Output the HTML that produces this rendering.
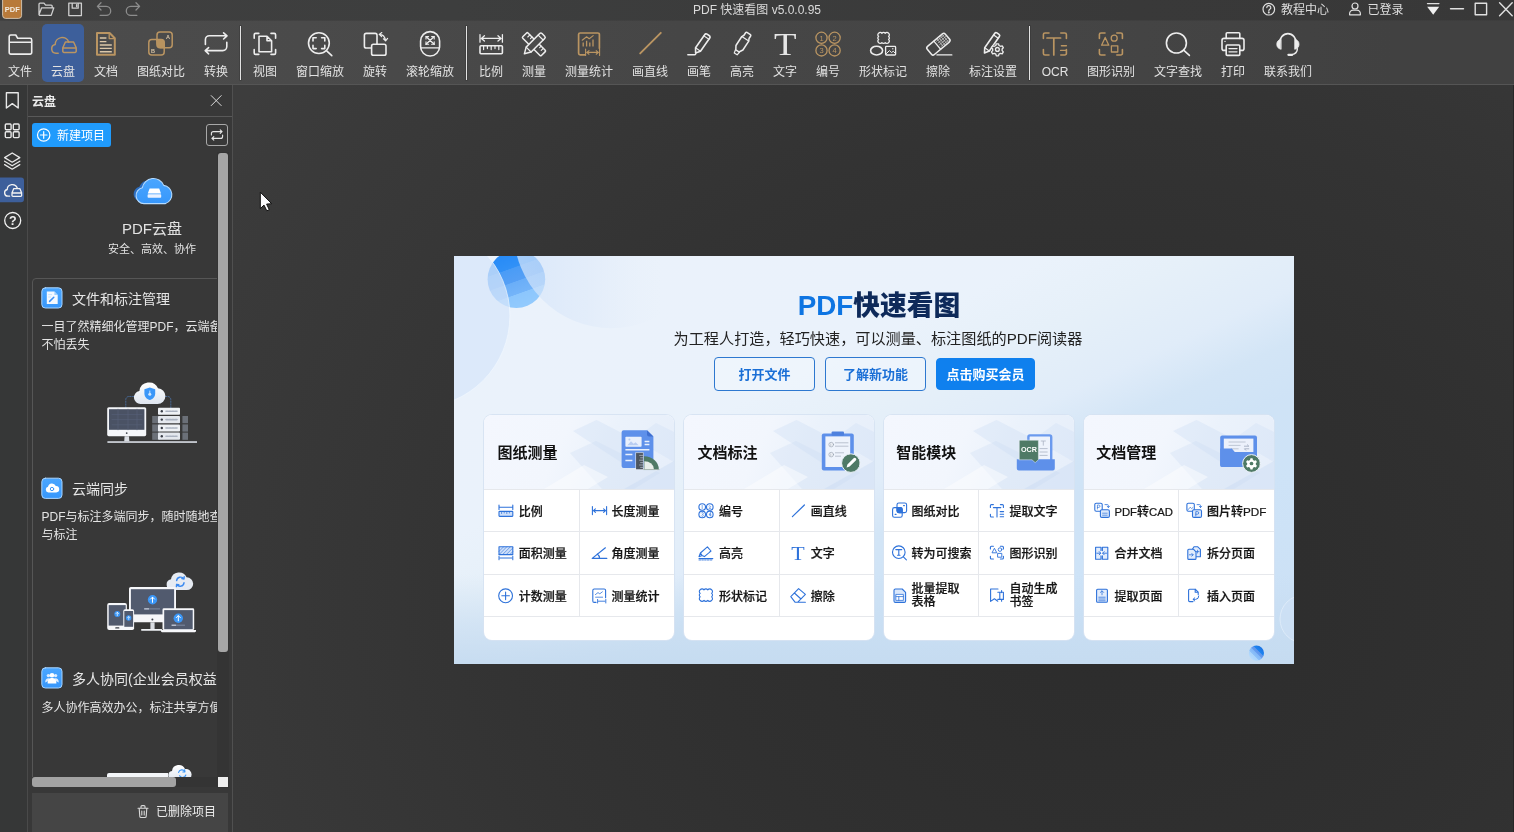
<!DOCTYPE html>
<html lang="zh-CN">
<head>
<meta charset="utf-8">
<title>PDF 快速看图 v5.0.0.95</title>
<style>
*{box-sizing:border-box;margin:0;padding:0}
html,body{width:1514px;height:832px;overflow:hidden;background:#2e2e2e}
body{font-family:"Liberation Sans","Noto Sans CJK SC",sans-serif;color:#e4e4e4;position:relative;font-size:12px}
svg{display:block;overflow:visible}
#app{position:absolute;left:0;top:0;width:1514px;height:832px;will-change:transform}
.abs{position:absolute}
/* ---------- title bar ---------- */
#titlebar{position:absolute;left:0;top:0;width:1514px;height:20px;background:linear-gradient(90deg,#3f3f3f 0%,#3d3e3e 30%,#393939 75%,#383838 100%)}
#titlebar .ttl{position:absolute;left:0;width:1514px;top:0;height:20px;line-height:20px;text-align:center;font-size:12px;color:#dadada;letter-spacing:0}
#titlebar .rt{position:absolute;top:0;height:20px;line-height:20px;font-size:12px;color:#dedede;white-space:nowrap}
/* ---------- toolbar ---------- */
#toolbar{position:absolute;left:0;top:20px;width:1514px;height:64px;background:linear-gradient(rgba(58,58,58,.5) 0,rgba(58,58,58,.5) 1px,rgba(58,58,58,0) 1px),linear-gradient(90deg,#4c4c4c 0%,#4a4a4a 20%,#464646 45%,#454545 70%,#414141 92%,#414141 100%)}
.tb{position:absolute;top:0;height:64px;width:0}
.tb .ic{position:absolute;left:-16px;top:8px;width:32px;height:32px}
.tb .lb{position:absolute;left:-40px;width:80px;top:43.500px;height:16px;line-height:16px;text-align:center;font-size:12px;color:#e2e2e2;white-space:nowrap}
.tb.sel:before{content:"";position:absolute;left:-21px;top:4px;width:42px;height:58px;border-radius:5px;background:#3d5f9b}
.tsep{position:absolute;top:6px;width:1.300px;height:54px;background:#e2e2e2;box-shadow:0 0 0 .8px rgba(40,40,40,.35)}
/* ---------- left strip ---------- */
#strip{position:absolute;left:0;top:84px;width:27px;height:748px;background:#363737}
#stripline{position:absolute;left:27px;top:84px;width:1px;height:748px;background:#4a4a4a}
#panel{position:absolute;left:28px;top:84px;width:204px;height:748px;background:#383838}
#panelline{position:absolute;left:232px;top:84px;width:1px;height:748px;background:#505050}
.pt{position:absolute;left:44px;height:20px;line-height:20px;font-size:14px;color:#e6e6e6;white-space:nowrap}
.pd{position:absolute;left:13.5px;font-size:12px;line-height:17.500px;color:#e4e4e4;white-space:nowrap}
/* ---------- main ---------- */
#main{position:absolute;left:233px;top:84px;width:1281px;height:748px;background:radial-gradient(ellipse 500px 400px at 867px 516px,#2c2c2c 0%,#2e2e2e 40%,#303030 80%,#333333 120%,#373737 160%,#3b3b3b 200%,#3d3d3d 212%,#3d3d3d 260%)}
#welcome{position:absolute;left:454px;top:256px;width:840px;height:408px;background:linear-gradient(180deg,rgba(197,219,240,0) 0,rgba(197,219,240,0) 78%,rgba(197,219,240,.55) 90%,rgba(197,219,240,.92) 100%),linear-gradient(155deg,#ebf2fb 0%,#eaf2fb 35%,#e6f0f9 43%,#e0ecf9 53%,#d3e5f6 59.500%,#cfe3f6 66%,#cee3f7 75%,#cbe0f5 100%);overflow:hidden;color:#111}
.wt{position:absolute;left:0;width:850px;top:28px;height:44px;line-height:44px;text-align:center;font-size:26.750px;font-weight:900;color:#0e2a5a;white-space:nowrap;letter-spacing:0}
.ws{position:absolute;left:0;width:848px;top:71px;height:24px;line-height:24px;text-align:center;font-size:15.150px;color:#222;white-space:nowrap}
.wb{position:absolute;top:101px;height:34px;line-height:34.500px;border:1px solid #2d78d0;border-radius:4px;text-align:center;font-size:13px;font-weight:700;color:#1a6fd6;white-space:nowrap;background:rgba(240,246,253,.6)}
.wbf{background:#0f80ee;border-color:#0f80ee;color:#fff;top:102px;height:32px;line-height:32.500px}
.cd{will-change:transform;position:absolute;top:159px;width:189.500px;height:225px;border-radius:8px;background:#fff;overflow:hidden;box-shadow:0 0 0 1px rgba(214,226,242,.9)}
.ch{position:absolute;left:0;top:0;width:100%;height:74px;overflow:hidden;background:linear-gradient(115deg,#f4f7fe 0%,#f2f6fd 40%,#ebf2fb 62%,#e6eefa 100%)}
.cht{position:absolute;left:13.500px;top:26px;height:24px;line-height:24px;font-size:15px;font-weight:700;color:#111;white-space:nowrap}
.ct{position:absolute;height:42px;line-height:44.400px;font-size:12px;font-weight:500;color:#161616;white-space:nowrap;-webkit-text-stroke:.22px #161616}
.ct2{line-height:13.500px;padding-top:8.200px}
.hl{position:absolute;left:0;width:100%;height:1px;background:#e6e8ec}
.vl{position:absolute;left:94.800px;top:74px;width:1px;height:128px;background:#e6e8ec}
</style>
</head>
<body>
<div id="app">
<div id="titlebar">
  <div class="ttl">PDF 快速看图 v5.0.0.95</div>
  <div class="rt" style="left:1281px">教程中心</div>
  <div class="rt" style="left:1367.5px">已登录</div>
</div>
<div id="toolbar">
<div class="tb" style="left:20px"><div class="lb">文件</div></div>
<div class="tb sel" style="left:63px"><div class="lb">云盘</div></div>
<div class="tb" style="left:106px"><div class="lb">文档</div></div>
<div class="tb" style="left:161px"><div class="lb">图纸对比</div></div>
<div class="tb" style="left:216px"><div class="lb">转换</div></div>
<div class="tb" style="left:265px"><div class="lb">视图</div></div>
<div class="tb" style="left:320px"><div class="lb">窗口缩放</div></div>
<div class="tb" style="left:375px"><div class="lb">旋转</div></div>
<div class="tb" style="left:430px"><div class="lb">滚轮缩放</div></div>
<div class="tb" style="left:491px"><div class="lb">比例</div></div>
<div class="tb" style="left:534px"><div class="lb">测量</div></div>
<div class="tb" style="left:589px"><div class="lb">测量统计</div></div>
<div class="tb" style="left:650px"><div class="lb">画直线</div></div>
<div class="tb" style="left:699px"><div class="lb">画笔</div></div>
<div class="tb" style="left:742px"><div class="lb">高亮</div></div>
<div class="tb" style="left:785px"><div class="lb">文字</div></div>
<div class="tb" style="left:828px"><div class="lb">编号</div></div>
<div class="tb" style="left:883px"><div class="lb">形状标记</div></div>
<div class="tb" style="left:938px"><div class="lb">擦除</div></div>
<div class="tb" style="left:993px"><div class="lb">标注设置</div></div>
<div class="tb" style="left:1055px"><div class="lb">OCR</div></div>
<div class="tb" style="left:1111px"><div class="lb">图形识别</div></div>
<div class="tb" style="left:1178px"><div class="lb">文字查找</div></div>
<div class="tb" style="left:1233px"><div class="lb">打印</div></div>
<div class="tb" style="left:1288px"><div class="lb">联系我们</div></div>
<div class="tsep" style="left:240px"></div>
<div class="tsep" style="left:466px"></div>
<div class="tsep" style="left:1029px"></div>
</div>
<svg id="topsvg" class="abs" style="left:0;top:0" width="1514" height="84" viewBox="0 0 1514 84" fill="none" stroke-width="1.6" stroke-linecap="round" stroke-linejoin="round">
<!-- ===== title bar icons ===== -->
<rect x="2.600" y="-3" width="19" height="21.400" rx="3" fill="#b87a3a" stroke="#d6c9b8" stroke-width=".9"/>
<text x="12.3" y="12" font-family="Liberation Sans,sans-serif" font-weight="bold" font-size="7.5" fill="#f3ece2" text-anchor="middle" stroke="none">PDF</text>
<g stroke="#cfcfcf" stroke-width="1.3">
<path d="M39 14.8V4.2a1 1 0 0 1 1-1h4l1.6 2h5.6a1 1 0 0 1 1 1v1.6M39 14.8l2.6-7h12.2l-2.6 7.6H39.6z"/>
<path d="M68.8 3.2h12.6v12.4H68.8zM72.2 3.2v5h6v-5M76.6 4.6v2"/>
</g>
<g stroke="#8d8d8d" stroke-width="1.3">
<path d="M101 2.8l-3.6 3.6 3.6 3.6M97.6 6.4h8.6a4.5 4.5 0 0 1 0 9h-6"/>
<path d="M136 2.8l3.6 3.6-3.6 3.6M139.4 6.4h-8.6a4.5 4.5 0 0 0 0 9h6"/>
</g>
<!-- right side of title bar -->
<g stroke="#e0e0e0" stroke-width="1.2">
<circle cx="1268.8" cy="9.2" r="5.8"/>
<path d="M1266.8 7.6a2 2 0 1 1 3 1.7c-.7.4-1 .8-1 1.6"/>
<circle cx="1268.8" cy="12.6" r=".4" fill="#e0e0e0"/>
<circle cx="1355" cy="6" r="3"/>
<path d="M1349.6 14.8v-1a3.6 3.6 0 0 1 3.6-3.6h3.6a3.6 3.6 0 0 1 3.6 3.6v1z"/>
<path d="M1427.5 3.6h11.4" stroke-width="1.4"/>
<path d="M1427.2 6.8h12l-6 8z" fill="#f0f0f0" stroke="none"/>
<path d="M1450.5 8.8h13" stroke-width="1.4"/>
<rect x="1475.2" y="3.2" width="11.4" height="11.6" stroke-width="1.4"/>
<path d="M1499.6 2.8l12.6 13M1512.2 2.8l-12.6 13" stroke-width="1.4"/>
</g>
<!-- ===== toolbar icons ===== -->
<g stroke="#ededed">
<!-- 文件 -->
<path d="M9.2 36.6a1.6 1.6 0 0 1 1.6-1.6h5l1.9 3.3h12.4a1.6 1.6 0 0 1 1.6 1.6v12.6a1.6 1.6 0 0 1-1.6 1.6H10.8a1.6 1.6 0 0 1-1.6-1.6zM9.2 42.2h22.5"/>
<!-- 转换 -->
<path d="M205.4 44.4v-4.7a4 4 0 0 1 4-4h17.2M223.6 32.8l3.4 3-3.4 3.2M226.8 42.2v4.4a4 4 0 0 1-4 4h-17.2M208.6 47.6l-3.4 3 3.4 3.2"/>
<!-- 视图 -->
<path d="M254.2 38.2v-3.4a1.4 1.4 0 0 1 1.4-1.4h3.2M271 33.4h3.2a1.4 1.4 0 0 1 1.4 1.4v3.4M275.6 49.6v3.4a1.4 1.4 0 0 1-1.4 1.4H271M258.8 54.4h-3.2a1.4 1.4 0 0 1-1.4-1.4v-3.4"/>
<path d="M259 36.2h8l4.6 4.6v11h-12.6zM267 36.2v4.6h4.6"/>
<!-- 窗口缩放 -->
<circle cx="318.9" cy="43.1" r="10.4"/>
<path d="M326.4 50.6l5.4 5M313 41v-3.2h3.2M321.6 37.8h3.2V41M324.8 45.4v3.2h-3.2M316.2 48.6H313v-3.2"/>
<!-- 旋转 -->
<rect x="364.4" y="33.4" width="12.6" height="14.6" rx="1.8"/>
<rect x="371.6" y="44.2" width="14.4" height="11" rx="1.8" fill="#4b4b4b"/>
<path d="M379.4 34.4q5.4.2 6 6.2M381.6 36.6l-2.4-2.2 2.6-1.8M383.4 38.8l2.2 2 2-2.4" stroke-width="1.2"/>
<!-- 滚轮缩放 -->
<rect x="420.6" y="31.6" width="19" height="24.4" rx="9.5"/>
<path d="M420.6 47.8h19M426 36.6l8.2 7.6M434.2 36.6l-8.200 7.6" stroke-width="1.3"/>
<path d="M426 39v-2.4h2.6M431.600 36.600h2.600v2.4M434.2 41.8v2.4h-2.600M428.6 44.2H426v-2.400" stroke-width="1.100"/>
<!-- 比例 -->
<path d="M480 34.600v7.600M502.4 34.600v7.600M481.400 38.400h19.600M484.400 35.800l-3 2.600 3 2.600M498 35.800l3 2.600-3 2.600" stroke-width="1.300"/>
<rect x="480" y="45.800" width="22.400" height="8" rx="1"/>
<path d="M483.600 46v3.600M487.400 46v2.600M491.200 46v3.600M495 46v2.600M498.800 46v3.600" stroke-width="1.200"/>
<!-- 测量 -->
<g transform="translate(534 44.200) rotate(45)" stroke-width="1.500">
<rect x="-13.200" y="-3.700" width="26.400" height="7.400" rx="1"/>
<path d="M-9.500 -3.700v3M-6.500 -3.700v2.200M6.500 -3.700v2.200M9.500 -3.700v3" stroke-width="1.100"/>
</g>
<g transform="translate(534 44.200) rotate(-45)" stroke-width="1.500">
<path d="M-7.600 -3.500H11.600a1.600 1.600 0 0 1 1.600 1.600v3.800a1.600 1.600 0 0 1-1.600 1.600H-7.600L-13.600 0z" fill="#4b4b4b"/>
<path d="M-7.600 -3.500v7M9.400 -3.500v7" stroke-width="1.200"/>
</g>
<!-- 画笔 -->
<g transform="translate(702.600 43) rotate(-55)">
<path d="M-8 -3h16.200a1.600 1.600 0 0 1 1.600 1.600v2.800a1.600 1.600 0 0 1-1.600 1.600H-8L-12.200 0z"/>
<path d="M-8 -3v6M6.600 -3v6" stroke-width="1.200"/>
</g>
<path d="M687.800 54.800h6.800q1.200 0 1.200-1.400" stroke-width="1.400"/>
<!-- 高亮 -->
<g transform="translate(742.400 43.200) rotate(-57) scale(.94)">
<path d="M-5.800 -4.400H5.600l2.400 1.200h3.200a1 1 0 0 1 1 1v4.400a1 1 0 0 1-1 1H8L5.600 4.400H-5.800L-9.800 2v-4z"/>
<path d="M-9.800 -2.400l-3.600.8v3.600l3.600.6M5.600 -4.400v8.800" stroke-width="1.300"/>
</g>
<!-- 形状标记 -->
<path d="M878.60 33.30a2.07 2.07 0 0 1 3.33 0a2.07 2.07 0 0 1 3.33 0a2.07 2.07 0 0 1 3.33 0a1.92 1.92 0 0 1 0 3.10a1.92 1.92 0 0 1 0 3.10a1.92 1.92 0 0 1 0 3.10a2.07 2.07 0 0 1 -3.33 0a2.07 2.07 0 0 1 -3.33 0a2.07 2.07 0 0 1 -3.33 0a1.92 1.92 0 0 1 0 -3.10a1.92 1.92 0 0 1 0 -3.10a1.92 1.92 0 0 1 0 -3.10z" stroke-width="1.300"/>
<ellipse cx="876.600" cy="50.600" rx="6" ry="4.400"/>
<rect x="885.600" y="46.400" width="10" height="8.600" rx=".8" stroke-width="1.300"/>
<path d="M886.400 53.600l3-3 2.200 2 1.600-1.400 2 2" stroke-width="1"/><circle cx="892.800" cy="48.800" r=".7" fill="#ededed" stroke="none"/>
<!-- 擦除 -->
<g transform="translate(938.400 44.200) rotate(-40) scale(.95)">
<rect x="-12.400" y="-5.600" width="24.800" height="11.200" rx="2.200"/>
<path d="M-1.600 -5.600v11.200" stroke-width="1.300"/>
<path d="M.6 -3.600h10M.6 -1.200h10.600M.6 1.200h10.600M.6 3.600h10M2.400 -5v10M4.800 -5v10M7.200 -5v10M9.600 -5v10" stroke-width=".7" stroke="#d0d0d0"/>
</g>
<path d="M937 54.900h14.800" stroke-width="1.400"/>
<!-- 标注设置 -->
<g transform="translate(991.600 42.800) rotate(-55)">
<path d="M-8 -2.800H9.600a1.500 1.500 0 0 1 1.500 1.500v2.600a1.500 1.500 0 0 1-1.500 1.500H-8L-12.400 0z"/>
<path d="M-8 -2.800v5.600M7.600 -2.800v5.600" stroke-width="1.200"/>
</g>
<g transform="translate(997.400 49.400)">
<circle r="5.600" fill="#4b4b4b" stroke="none"/>
<path d="M-1.100 -5.600h2.200l.5 1.700 1.500.8 1.700-.5 1.100 1.900-1.200 1.300v1.600l1.200 1.300-1.100 1.900-1.700-.5-1.500.8-.5 1.700h-2.200l-.5-1.700-1.500-.8-1.700.5-1.100-1.900 1.200-1.300v-1.600l-1.200-1.300 1.100-1.900 1.700.5 1.500-.8z" fill="#4b4b4b" stroke-width="1.300"/>
<circle r="1.900" stroke-width="1.300"/>
</g>
<!-- 文字查找 -->
<circle cx="1176.400" cy="43" r="10"/>
<path d="M1183.600 50.200l5.800 5.200"/>
<!-- 打印 -->
<path d="M1226.200 38.400v-4.600a1 1 0 0 1 1-1h11.600a1 1 0 0 1 1 1v4.600"/>
<path d="M1226.200 50.400h-2.200a2 2 0 0 1-2-2v-8a2 2 0 0 1 2-2h18a2 2 0 0 1 2 2v8a2 2 0 0 1-2 2h-2.200"/>
<rect x="1226.200" y="45" width="13.600" height="10.400" rx="1"/>
<path d="M1229 48.600h8M1229 51.800h8" stroke-width="1.300"/><circle cx="1225" cy="41.400" r=".7" fill="#ededed" stroke="none"/>
<!-- 联系我们 -->
<path d="M1279.400 43.600a8.500 10 0 0 1 17 0" stroke-width="1.700"/>
<path d="M1280.800 39.400a5 5 0 0 0 0 9.800zM1295 39.400a5 5 0 0 1 0 9.800z" fill="#ededed" stroke-width=".8"/>
<path d="M1297.400 48.600q-.2 5-5.400 6" stroke-width="1.400"/><path d="M1288.400 54.800h3.800" stroke-width="2.200"/>
</g>
<!-- gold icons -->
<g stroke="#ba9562">
<!-- 云盘 -->
<path d="M58.200 53.200H56a4.400 4.400 0 0 1-.8-8.700 7 7 0 0 1 13.600-2.300" stroke-width="1.500"/>
<path d="M65.400 42h8.200l2.600 5.800v3.400a1.200 1.200 0 0 1-1.200 1.200H64a1.200 1.200 0 0 1-1.200-1.200v-3.400zM62.800 48h13.400" stroke-width="1.500"/>
<!-- 文档 -->
<path d="M97 33h12.600l5.200 5.200v16.600H97z" stroke-width="2"/>
<path d="M109.200 33.400v5.200h5.200" stroke-width="1.300"/>
<path d="M99.800 38h6.600M99.800 41.600h6.600M99.800 45h12M99.800 48.400h12M99.800 51.800h12" stroke="#dcc7a8" stroke-width="1.400" stroke-linecap="butt"/>
<!-- 图纸对比 -->
<rect x="157" y="32" width="15.200" height="15.800" rx="3" stroke-width="1.500"/>
<rect x="148.800" y="39.600" width="15.400" height="15.400" rx="3" stroke-width="1.500"/>
<path d="M157 39.600h4.200a3 3 0 0 1 3 3v5.200h-4.200a3 3 0 0 1-3-3z" fill="#b8935f" stroke-width="1"/>
<text x="168" y="39" font-family="Liberation Sans,sans-serif" font-size="5.500" font-weight="bold" fill="#dcc7a8" stroke="none" text-anchor="middle">A</text>
<text x="153" y="53" font-family="Liberation Sans,sans-serif" font-size="5.500" font-weight="bold" fill="#dcc7a8" stroke="none" text-anchor="middle">B</text>
<!-- 测量统计 -->
<path d="M585 54.800h-4.800a1.600 1.600 0 0 1-1.600-1.600V34.600a1.600 1.600 0 0 1 1.600-1.600h17.600a1.600 1.600 0 0 1 1.600 1.600v13.600" stroke-width="1.700"/>
<path d="M583.200 46.400v-4M586.600 46.400v-5.600M589.800 46.400v-4M593 46.400v-7" stroke-width="1.300" stroke-linecap="butt"/>
<path d="M582.200 40.200l4.400-3.400 2.600 2 4-3.200" stroke-width="1.100"/>
<path d="M585.600 49v6.400M599.600 49v6.400M586.800 52.400h11.600M589 50.600l-2.200 1.800 2.200 1.800M596.200 50.600l2.200 1.800-2.200 1.800" stroke-width="1.100"/>
<!-- 画直线 -->
<path d="M640.200 53.400L660.800 32.800" stroke-width="1.900"/>
<!-- 编号 -->
<g stroke-width="1.300">
<circle cx="821.500" cy="37.800" r="5.600"/><circle cx="834.600" cy="37.800" r="5.600"/><circle cx="821.500" cy="50.400" r="5.600"/><circle cx="834.600" cy="50.400" r="5.600"/>
</g>
<g font-family="Liberation Sans,sans-serif" font-size="7.500" fill="#ba9562" stroke="none" text-anchor="middle">
<text x="821.500" y="40.500">1</text><text x="834.600" y="40.500">2</text><text x="821.500" y="53.100">3</text><text x="834.600" y="53.100">4</text>
</g>
<!-- OCR -->
<path d="M1043.400 38.400v-3.800a1.600 1.600 0 0 1 1.600-1.600h4M1060.800 33h4a1.600 1.600 0 0 1 1.600 1.600v3.800M1066.400 49.600v3.800a1.600 1.600 0 0 1-1.600 1.600h-4M1049 55h-4a1.600 1.600 0 0 1-1.600-1.600v-3.800"/>
<path d="M1047 38h13.600M1053.800 38v17" stroke-width="1.700"/>
<path d="M1061.400 45.800h5M1060.600 50.400h5.800" stroke-width="1.400"/>
<!-- 图形识别 -->
<path d="M1099.400 38.400v-3.800a1.600 1.600 0 0 1 1.600-1.600h4M1116.800 33h4a1.600 1.600 0 0 1 1.600 1.600v3.800M1122.400 49.600v3.800a1.600 1.600 0 0 1-1.600 1.600h-4M1105 55h-4a1.600 1.600 0 0 1-1.600-1.600v-3.800"/>
<path d="M1105.200 37.400l3.600 7.800h-7.200z" stroke-width="1.300"/>
<circle cx="1114.200" cy="38.200" r="3" stroke-width="1.300"/>
<rect x="1111.400" y="45.800" width="6.400" height="6.200" stroke-width="1.300"/>
</g>
<!-- 文字 (T) -->
<text x="785.200" y="54.500" font-family="Liberation Serif,Noto Serif CJK SC,serif" font-weight="400" font-size="32" fill="#e6e6e6" stroke="none" text-anchor="middle" textLength="22.500" lengthAdjust="spacingAndGlyphs">T</text>
</svg>

<div class="abs" style="left:0;top:84px;width:1514px;height:1px;background:#555;z-index:2"></div>
<div id="strip"></div><div id="stripline"></div>
<div id="panel"></div><div id="panelline"></div>
<!-- panel header -->
<div class="abs" style="left:32px;top:93px;height:18px;line-height:18px;font-size:12px;font-weight:700;color:#ececec">云盘</div>
<div class="abs" style="left:28px;top:116px;width:204px;height:1px;background:#595959"></div>
<!-- new project button -->
<div class="abs" style="left:32px;top:123px;width:79px;height:24px;border-radius:3px;background:#209bfc"></div>
<div class="abs" style="left:57px;top:127px;height:18px;line-height:18px;font-size:12px;color:#fff;white-space:nowrap">新建项目</div>
<!-- refresh button -->
<div class="abs" style="left:206px;top:124px;width:22px;height:22px;border:1px solid #a8a8a8;border-radius:3px"></div>
<!-- scroll tracks -->
<!-- cards area (clipped) -->
<div id="cards" class="abs" style="left:28px;top:150px;width:190px;height:627px;overflow:hidden">
  <div class="abs" style="left:0;top:69px;width:248px;text-align:center;font-size:15px;line-height:20px;color:#e2e2e2;white-space:nowrap">PDF云盘</div>
  <div class="abs" style="left:0;top:91px;width:248px;text-align:center;font-size:11px;line-height:16px;color:#e2e2e2;white-space:nowrap">安全、高效、协作</div>
  <div class="abs" style="left:4px;top:128px;width:260px;height:700px;border:1px solid #565656;border-radius:4px"></div>
  <div class="pt" style="top:139px">文件和标注管理</div>
  <div class="pd" style="top:169.300px">一目了然精细化管理PDF，云端备<br>不怕丢失</div>
  <div class="pt" style="top:329px">云端同步</div>
  <div class="pd" style="top:359.300px">PDF与标注多端同步，随时随地查<br>与标注</div>
  <div class="pt" style="top:519px">多人协同(企业会员权益</div>
  <div class="pd" style="top:549.800px">多人协作高效办公，标注共享方便</div>
</div>
<svg id="panelsvg" class="abs" style="left:0;top:84px" width="232" height="748" viewBox="0 84 232 748" fill="none" stroke-linecap="round" stroke-linejoin="round">
<defs>
<linearGradient id="gb" x1="0" y1="0" x2="0" y2="1"><stop offset="0" stop-color="#4aa6ff"/><stop offset="1" stop-color="#3797fb"/></linearGradient>
<linearGradient id="gw" x1="0" y1="0" x2="0" y2="1"><stop offset="0" stop-color="#ffffff"/><stop offset="1" stop-color="#dfe6f0"/></linearGradient>
</defs>
<!-- strip icons -->
<g stroke="#e8e8e8" stroke-width="1.4">
<path d="M6.400 92.800h11.800v15.200l-5.900-4.400-5.900 4.400z"/>
<rect x="5.300" y="124" width="5.800" height="5.800" rx="1"/><rect x="13.300" y="124" width="5.800" height="5.800" rx="1"/><rect x="5.300" y="131.800" width="5.800" height="5.800" rx="1"/><rect x="13.300" y="131.800" width="5.800" height="5.800" rx="1"/>
<path d="M12.200 153l7.600 4.600-7.600 4.600-7.600-4.600zM4.600 161.200l7.600 4.600 7.600-4.600M4.600 164.600l7.600 4.600 7.600-4.600" stroke-width="1.300"/>
</g>
<path d="M0 177.400h21a3 3 0 0 1 3 3v18.800a3 3 0 0 1-3 3H0z" fill="#3d5f9b"/>
<g stroke="#f2f2f2" stroke-width="1.300">
<path d="M9.600 196.200H7.800a3.400 3.400 0 0 1-.6-6.700 5.200 5.200 0 0 1 10-1.700"/>
<path d="M13.800 188.600h6l1.800 4.200v2.600a.9.900 0 0 1-.9.900h-7.800a.9.900 0 0 1-.9-.9v-2.600zM12 193h9.600"/>
<circle cx="12.700" cy="220.500" r="8"/>
</g>
<text x="12.700" y="225" font-family="Liberation Sans,sans-serif" font-size="12.500" font-weight="bold" fill="#f0f0f0" text-anchor="middle">?</text>
<!-- close X -->
<path d="M211.200 95.600l10 10M221.200 95.600l-10 10" stroke="#dcdcdc" stroke-width="1"/>
<!-- plus circle -->
<circle cx="43.700" cy="135" r="6.200" stroke="#fff" stroke-width="1.200"/><path d="M40.400 135h6.600M43.700 131.700v6.600" stroke="#fff" stroke-width="1.200"/>
<!-- refresh icon -->
<g stroke="#e6e6e6" stroke-width="1.100">
<path d="M211.400 135v-1.400a2 2 0 0 1 2-2h8.600M220.200 129.800l1.900 1.800-1.900 1.800M222.600 135v1.400a2 2 0 0 1-2 2h-8.600M213.800 136.600l-1.900 1.800 1.900 1.800"/>
</g>
<!-- PDF cloud logo -->
<g transform="translate(1.400 0)">
<path d="M139.500 201.500a7.500 7.500 0 0 1-1.500-14.800 9 9 0 0 1 14-4.200" fill="#2a7be0" opacity=".8"/>
<path d="M142.500 203.600a8 8 0 0 1-1.600-15.800 11.200 11.200 0 0 1 21.400-2.400 9.400 9.400 0 0 1 1.800 18.200z" fill="url(#gb)" stroke="#b5dbff" stroke-width="1.100"/>
<path d="M148.200 188.400h9.600l1.800 5.200h-13.200z" fill="#fff"/><rect x="146.200" y="194.200" width="13.600" height="3.600" rx=".8" fill="#eaf2ff"/>
</g>
<!-- card icons -->
<g>
<rect x="41.800" y="287.800" width="20.200" height="20.200" rx="3.500" fill="url(#gb)" stroke="#a8d4ff" stroke-width="1"/>
<path d="M46.800 291.600h7.600l3.300 3.300v9.100h-10.900z" fill="#f4f9ff"/><path d="M54.400 291.600v3.300h3.300z" fill="#9fd0ff"/><path d="M49.600 301.400l4.200-4.200" stroke="#3b8ff5" stroke-width="1.500"/><path d="M48.600 294.600h3M48.600 297h2" stroke="#b9dcff" stroke-width=".8"/>
<rect x="41.800" y="478.200" width="20.200" height="20.200" rx="3.500" fill="url(#gb)" stroke="#a8d4ff" stroke-width="1"/>
<path d="M48.400 492.400a2.900 2.900 0 0 1-.4-5.700 4.100 4.100 0 0 1 7.800-.7 3.200 3.200 0 0 1 .4 6.400z" fill="#fff"/><circle cx="52" cy="489" r="1.700" stroke="#3b97f8" stroke-width="1"/>
<rect x="41.800" y="667.800" width="20.200" height="20.200" rx="3.500" fill="url(#gb)" stroke="#a8d4ff" stroke-width="1"/>
<circle cx="48.400" cy="675.600" r="1.700" fill="#dcecff"/><circle cx="55.600" cy="675.600" r="1.700" fill="#dcecff"/><path d="M45.200 682.400c0-3 1.400-4.200 3.200-4.200s2.400 1 2.400 1.600M58.800 682.400c0-3-1.400-4.200-3.200-4.200s-2.400 1-2.400 1.600" fill="#dcecff"/>
<circle cx="52" cy="675.200" r="2.300" fill="#fff"/><path d="M47.600 683.600c0-4 2-5.600 4.400-5.600s4.400 1.600 4.400 5.600z" fill="#fff"/>
</g>
<!-- illustration 1 -->
<g>
<path d="M125.800 408v-8.500a3 3 0 0 1 3-3h6M170.800 408v-8.500a3 3 0 0 0-3-3h-4" stroke="#4f82c8" stroke-width=".8" stroke-dasharray="1.400 1.400" opacity=".8"/>
<path d="M140.600 404a6.600 6.600 0 0 1-1.200-13.100 9.800 9.800 0 0 1 18.600-2.700 7.900 7.900 0 0 1 7.400 7.900 7.900 7.900 0 0 1-7.900 7.900z" fill="url(#gw)"/>
<path d="M149.800 387.400l5.400 1.800v4.200c0 3.800-3 5.800-5.400 6.600-2.400-.8-5.400-2.800-5.400-6.600v-4.200z" fill="#3b97f8"/><circle cx="149.800" cy="394.200" r="1.500" fill="#cfe6ff"/><path d="M149.800 391v2" stroke="#cfe6ff" stroke-width=".9"/>
<rect x="152.200" y="416" width="8" height="7.200" fill="#6b7078"/><rect x="152.200" y="424.400" width="8" height="7.200" fill="#6b7078"/><rect x="152.200" y="432.600" width="8" height="7.200" fill="#6b7078"/>
<rect x="182.400" y="416" width="5.600" height="7.200" fill="#6b7078"/><rect x="182.400" y="424.400" width="5.600" height="7.200" fill="#6b7078"/><rect x="182.400" y="432.600" width="5.600" height="7.200" fill="#6b7078"/>
<rect x="158" y="407.800" width="22" height="7" rx=".8" fill="#eef1f5"/><rect x="158" y="416" width="22" height="7.200" rx=".8" fill="#e4e8ee"/><rect x="158" y="424.400" width="22" height="7.200" rx=".8" fill="#eef1f5"/><rect x="158" y="432.600" width="22" height="7.200" rx=".8" fill="#e4e8ee"/>
<g fill="#3a3f48"><circle cx="161.800" cy="411.300" r="1.200"/><circle cx="161.800" cy="419.600" r="1.200"/><circle cx="161.800" cy="428" r="1.200"/><circle cx="161.800" cy="436.200" r="1.200"/></g>
<path d="M166 411.300h11.400M166 419.600h11.400M166 428h11.400M166 436.200h11.400" stroke="#aab2c0" stroke-width="1.600" stroke-dasharray="2 1"/>
<rect x="107.200" y="407.200" width="39" height="29" rx="1.600" fill="#f4f6f9"/><rect x="109" y="409.200" width="35.400" height="20.600" fill="#4a5264"/>
<path d="M112 414.400h30M112 419.600h30M112 424.800h30M118 409.200v20.600M128 409.200v20.600M137 409.200v20.600" stroke="#586178" stroke-width=".6"/>
<circle cx="126.700" cy="433.100" r=".9" fill="#3a3f48"/><path d="M124.600 436.200h4.400l.4 5.400h-5.200z" fill="#d9dde3"/>
<rect x="107.400" y="441.200" width="89.600" height="1.700" fill="#d0d4db"/>
</g>
<!-- illustration 2 -->
<g>
<path d="M171.800 590a5.400 5.400 0 0 1-.8-10.700 8.200 8.200 0 0 1 15.600-2 6.500 6.500 0 0 1 6.600 6.400 6.400 6.400 0 0 1-6.400 6.300z" fill="#e6ebf2"/>
<path d="M176.600 580.600a4 4 0 0 1 7.200-1.800M184 582.800a4 4 0 0 1-7.200 1.800M184.200 576.800l-.2 2.200-2.200-.4M176.400 586.600l.2-2.200 2.200.4" stroke="#3b8af0" stroke-width="1.400"/>
<rect x="129" y="586.900" width="47" height="35.400" rx="1.800" fill="#f6f7fa"/><rect x="130.900" y="589.200" width="43.200" height="25.200" fill="#515a6e"/>
<circle cx="152.500" cy="599.700" r="4.700" fill="#3b97f8"/><path d="M152.500 602.300v-5M150.500 599.100l2-2 2 2" stroke="#fff" stroke-width="1"/><path d="M144.600 608.900h15" stroke="#7e8aa2" stroke-width="1"/><path d="M144.600 608.900h4" stroke="#d5dbe6" stroke-width="1"/>
<circle cx="152.400" cy="619.400" r="1" fill="#3a3f48"/><rect x="150.400" y="622.300" width="4.200" height="7" fill="#d9dde3"/><rect x="141" y="629.100" width="21.200" height="1.600" rx=".8" fill="#eef1f5"/>
<rect x="107.200" y="603" width="19.700" height="27.100" rx="2" fill="#f6f7fa"/><rect x="108.700" y="605.100" width="17" height="20.500" fill="#515a6e"/><circle cx="117.300" cy="614" r="3" fill="#3b97f8"/><path d="M117.300 615.600v-3.200M116 613.600l1.300-1.300 1.300 1.300" stroke="#fff" stroke-width=".7"/><rect x="115.200" y="627.300" width="4.200" height="1.200" rx=".6" fill="#3a3f48"/>
<rect x="123.300" y="609.200" width="10.800" height="20.900" rx="1.800" fill="#f6f7fa"/><rect x="124.300" y="611" width="8.800" height="15.800" fill="#515a6e"/><circle cx="128.700" cy="618" r="2.700" fill="#3b97f8"/><path d="M128.700 619.400v-2.800M127.600 617.700l1.100-1.100 1.100 1.100" stroke="#fff" stroke-width=".6"/>
<rect x="162.500" y="608.300" width="31.700" height="21.800" rx="1.400" fill="#f6f7fa"/><rect x="164.200" y="610.100" width="28.500" height="19.100" fill="#515a6e"/><circle cx="178.300" cy="618.200" r="4.700" fill="#3b97f8"/><path d="M178.300 620.800v-5M176.300 617.600l2-2 2 2" stroke="#fff" stroke-width="1"/><path d="M172 625.200h12.600" stroke="#7e8aa2" stroke-width="1"/><path d="M172 625.200h3.600" stroke="#d5dbe6" stroke-width="1"/>
<path d="M160.900 630.100h35.100v1a1.100 1.100 0 0 1-1.100 1.100h-32.900a1.100 1.100 0 0 1-1.100-1.100z" fill="#f6f7fa"/>
</g>
<!-- illustration 3 (top only) -->
<g>
<path d="M172.600 780a4.600 4.600 0 0 1-.6-9.100 6.800 6.800 0 0 1 13-1.800 5.500 5.500 0 0 1 6.600 5.400 5.500 5.500 0 0 1-5.500 5.500z" fill="url(#gw)"/>
<path d="M178.600 772.400a3.400 3.400 0 0 1 6.200-.8M185.800 775a3.400 3.400 0 0 1-6.200.8M184.600 769.800l.3 2-2 .2" stroke="#3b97f8" stroke-width="1.200"/>
<path d="M107 777v-2a2 2 0 0 1 2-2h59v4z" fill="#f4f6f9"/>
</g>
</svg>
<!-- scrollbars -->
<div class="abs" style="left:217px;top:152px;width:12px;height:636px;background:#343434"></div>
<div class="abs" style="left:32px;top:777px;width:186px;height:10px;background:#343434"></div>

<div class="abs" style="left:218px;top:153px;width:10px;height:499px;border-radius:3px;background:#a6a6a6"></div>
<div class="abs" style="left:32px;top:777px;width:144px;height:10px;border-radius:3px;background:#a3a3a3"></div>
<div class="abs" style="left:218px;top:777px;width:10px;height:10px;background:#efefef"></div>
<!-- deleted projects -->
<div class="abs" style="left:32px;top:793px;width:196px;height:39px;background:#454545"></div>
<svg class="abs" style="left:132px;top:800px" width="24" height="24" viewBox="132 800 24 24" fill="none" stroke-linecap="round" stroke-linejoin="round"><g stroke="#d8d8d8" stroke-width="1.100">
<path d="M138 808.200h10M141 808v-1.400a1 1 0 0 1 1-1h2a1 1 0 0 1 1 1v1.400M139.200 808.400l.6 8a1.200 1.200 0 0 0 1.200 1.100h4a1.200 1.200 0 0 0 1.200-1.100l.6-8M141.800 811v4M144.200 811v4"/>
</g></svg>
<div class="abs" style="left:156px;top:803px;height:18px;line-height:18px;font-size:12px;color:#ececec;white-space:nowrap">已删除项目</div>

<div id="main"></div>
<svg class="abs" style="left:258px;top:190px" width="16" height="22" viewBox="-2.300 -2.200 16 22"><path d="M0 0V16.400L3.700 12.900 6.500 18.600 9 17.500 6.300 11.900 11.400 11.500Z" fill="#fbfbfd" stroke="#111" stroke-width="1" stroke-linejoin="round"/></svg>
<div class="abs" style="left:1513px;top:84px;width:1px;height:748px;background:#262626"></div>
<div id="welcome">
<svg class="abs" style="left:0;top:0" width="840" height="407" viewBox="454 256 840 407">
<defs>
<linearGradient id="wband" gradientUnits="userSpaceOnUse" x1="500" y1="252" x2="520" y2="308"><stop offset="0" stop-color="#2489f7"/><stop offset=".32" stop-color="#3191f7"/><stop offset=".33" stop-color="#4a9cf6"/><stop offset=".55" stop-color="#559ff5"/><stop offset=".56" stop-color="#6aaef8"/><stop offset=".76" stop-color="#74b4f9"/><stop offset=".77" stop-color="#8cc6fd"/><stop offset="1" stop-color="#92cafd"/></linearGradient>
<linearGradient id="wball" x1=".85" y1=".15" x2=".15" y2=".85"><stop offset="0" stop-color="#1a72e2"/><stop offset=".3" stop-color="#1f86f2"/><stop offset=".31" stop-color="#5a93ea"/><stop offset=".5" stop-color="#6a9ff0"/><stop offset=".51" stop-color="#7fb6f7"/><stop offset=".72" stop-color="#8fc2fa"/><stop offset=".73" stop-color="#a9d3fb"/><stop offset="1" stop-color="#b5dbfd"/></linearGradient>
<linearGradient id="wtr" gradientUnits="userSpaceOnUse" x1="515" y1="0" x2="700" y2="0"><stop offset="0" stop-color="#d3e4fa" stop-opacity=".74"/><stop offset=".4" stop-color="#dde9f9" stop-opacity=".55"/><stop offset=".8" stop-color="#e6eef9" stop-opacity="0"/><stop offset="1" stop-color="#e6eef9" stop-opacity="0"/></linearGradient>
</defs>
<circle cx="516.400" cy="279.200" r="28.800" fill="url(#wband)"/>
<circle cx="418.200" cy="315.800" r="91.700" fill="#d6e5fa" fill-opacity=".74" stroke="#f2f8ff" stroke-opacity=".8" stroke-width=".8"/>
<circle cx="611.400" cy="230.400" r="97.800" fill="url(#wtr)"/>
<circle cx="1304" cy="619" r="24" fill="#cfe1f5" fill-opacity=".6" stroke="#e6f0fb" stroke-opacity=".7" stroke-width="1"/>
<circle cx="1256.400" cy="653.100" r="7.600" fill="url(#wball)"/>
</svg>
<div class="wt"><span style="color:#0e75e2;font-size:27.800px">PDF</span>快速看图</div>
<div class="ws">为工程人打造，轻巧快速，可以测量、标注图纸的PDF阅读器</div>
<div class="wb" style="left:260px;width:101px">打开文件</div>
<div class="wb" style="left:371px;width:101px">了解新功能</div>
<div class="wb wbf" style="left:482px;width:99px">点击购买会员</div>
<div class="cd" style="left:30px">
<div class="ch"><svg class="abs" style="left:0;top:0" width="190" height="74" viewBox="0 0 190 74"><path d="M89 16L112.600 5 170 34.600 142 50.500z" fill="#c9dcf3" fill-opacity=".34"/><path d="M86 38L112 26 176 58 150 74H118z" fill="#c9dcf3" fill-opacity=".3"/><path d="M150 24L172 8 190 17v30z" fill="#c9dcf3" fill-opacity=".28"/><path d="M60 74L100 50 124 62 104 74z" fill="#ffffff" fill-opacity=".45"/><path d="M140 74L190 46v28z" fill="#c3d8f1" fill-opacity=".35"/></svg><div class="cht">图纸测量</div></div>
<div class="ct" style="left:34.7px;top:74.6px">比例</div>
<div class="ct" style="left:127.6px;top:74.6px">长度测量</div>
<div class="ct" style="left:34.7px;top:117.2px">面积测量</div>
<div class="ct" style="left:127.6px;top:117.2px">角度测量</div>
<div class="ct" style="left:34.7px;top:159.8px">计数测量</div>
<div class="ct" style="left:127.6px;top:159.8px">测量统计</div>
<div class="hl" style="top:74px"></div><div class="hl" style="top:116px"></div><div class="hl" style="top:158.800px"></div><div class="hl" style="top:201px"></div><div class="vl"></div>
</div>
<div class="cd" style="left:230px">
<div class="ch"><svg class="abs" style="left:0;top:0" width="190" height="74" viewBox="0 0 190 74"><path d="M89 16L112.600 5 170 34.600 142 50.500z" fill="#c9dcf3" fill-opacity=".34"/><path d="M86 38L112 26 176 58 150 74H118z" fill="#c9dcf3" fill-opacity=".3"/><path d="M150 24L172 8 190 17v30z" fill="#c9dcf3" fill-opacity=".28"/><path d="M60 74L100 50 124 62 104 74z" fill="#ffffff" fill-opacity=".45"/><path d="M140 74L190 46v28z" fill="#c3d8f1" fill-opacity=".35"/></svg><div class="cht">文档标注</div></div>
<div class="ct" style="left:34.9px;top:74.6px">编号</div>
<div class="ct" style="left:126.8px;top:74.6px">画直线</div>
<div class="ct" style="left:34.9px;top:117.2px">高亮</div>
<div class="ct" style="left:126.8px;top:117.2px">文字</div>
<div class="ct" style="left:34.9px;top:159.8px">形状标记</div>
<div class="ct" style="left:126.8px;top:159.8px">擦除</div>
<div class="hl" style="top:74px"></div><div class="hl" style="top:116px"></div><div class="hl" style="top:158.800px"></div><div class="hl" style="top:201px"></div><div class="vl"></div>
</div>
<div class="cd" style="left:430px">
<div class="ch"><svg class="abs" style="left:0;top:0" width="190" height="74" viewBox="0 0 190 74"><path d="M89 16L112.600 5 170 34.600 142 50.500z" fill="#c9dcf3" fill-opacity=".34"/><path d="M86 38L112 26 176 58 150 74H118z" fill="#c9dcf3" fill-opacity=".3"/><path d="M150 24L172 8 190 17v30z" fill="#c9dcf3" fill-opacity=".28"/><path d="M60 74L100 50 124 62 104 74z" fill="#ffffff" fill-opacity=".45"/><path d="M140 74L190 46v28z" fill="#c3d8f1" fill-opacity=".35"/></svg><div class="cht" style="left:12.200px">智能模块</div></div>
<div class="ct" style="left:27.5px;top:74.6px">图纸对比</div>
<div class="ct" style="left:125.6px;top:74.6px">提取文字</div>
<div class="ct" style="left:27.5px;top:117.2px">转为可搜索</div>
<div class="ct" style="left:125.6px;top:117.2px">图形识别</div>
<div class="ct ct2" style="left:27.5px;top:159.8px">批量提取<br>表格</div>
<div class="ct ct2" style="left:125.6px;top:159.8px">自动生成<br>书签</div>
<div class="hl" style="top:74px"></div><div class="hl" style="top:116px"></div><div class="hl" style="top:158.800px"></div><div class="hl" style="top:201px"></div><div class="vl" style="left:93.900px"></div>
</div>
<div class="cd" style="left:630px">
<div class="ch"><svg class="abs" style="left:0;top:0" width="190" height="74" viewBox="0 0 190 74"><path d="M89 16L112.600 5 170 34.600 142 50.500z" fill="#c9dcf3" fill-opacity=".34"/><path d="M86 38L112 26 176 58 150 74H118z" fill="#c9dcf3" fill-opacity=".3"/><path d="M150 24L172 8 190 17v30z" fill="#c9dcf3" fill-opacity=".28"/><path d="M60 74L100 50 124 62 104 74z" fill="#ffffff" fill-opacity=".45"/><path d="M140 74L190 46v28z" fill="#c3d8f1" fill-opacity=".35"/></svg><div class="cht" style="left:12.200px">文档管理</div></div>
<div class="ct" style="left:30.4px;top:74.6px"><span style="font-size:11.300px">PDF</span>转<span style="font-size:11.300px">CAD</span></div>
<div class="ct" style="left:123.0px;top:74.6px">图片转<span style="font-size:11.700px">PDF</span></div>
<div class="ct" style="left:30.4px;top:117.2px">合并文档</div>
<div class="ct" style="left:123.0px;top:117.2px">拆分页面</div>
<div class="ct" style="left:30.4px;top:159.8px">提取页面</div>
<div class="ct" style="left:123.0px;top:159.8px">插入页面</div>
<div class="hl" style="top:74px"></div><div class="hl" style="top:116px"></div><div class="hl" style="top:158.800px"></div><div class="hl" style="top:201px"></div><div class="vl" style="left:93.900px"></div>
</div>
<svg id="cardsvg" class="abs" style="left:0;top:0" width="840" height="407" viewBox="454 256 840 407" fill="none" stroke-linecap="round" stroke-linejoin="round">
<!-- ===== header illustrations ===== -->
<!-- card1: doc + ruler + protractor -->
<g>
<path d="M623.600 430.200h23.400l6.400 6.400v29.300a2 2 0 0 1-2 2h-27.800a2 2 0 0 1-2-2v-33.700a2 2 0 0 1 2-2z" fill="#5e90ea"/>
<path d="M647 430.200l6.400 6.400H649a2 2 0 0 1-2-2z" fill="#3f6fd0"/>
<rect x="625.400" y="436.800" width="16.200" height="10" rx=".8" fill="#e9f0fc"/><path d="M627.400 445.200l3.600-4 2.600 2.600 2-1.600 3 3z" fill="#b9cdf2"/><circle cx="629.400" cy="439.600" r="1" fill="#b9cdf2"/>
<path d="M644.600 441.600h4.800M644.600 444.600h4.800M625.400 449.800h24M625.400 454.600h7M625.400 460.400h7" stroke="#e9f0fc" stroke-width="1.500" stroke-linecap="butt"/>
<rect x="636" y="452.600" width="7.400" height="17" fill="#4d555f" stroke="#e8edf5" stroke-width=".6"/>
<path d="M639.600 455.400h3.400M640.600 457.800h2.400M639.600 460.200h3.400M640.600 462.600h2.400M639.600 465h3.400M640.600 467.400h2.400" stroke="#cfd6e0" stroke-width=".6"/>
<path d="M644 469.400v-13.200a14.600 13.200 0 0 1 14.800 13.200z" fill="#4f7a66"/><path d="M644.400 469.400v-8.200a9.600 8.200 0 0 1 9.600 8.200z" fill="#e9eeea"/>
<path d="M643.600 469.600h15.600" stroke="#9aa8a0" stroke-width=".6"/>
</g>
<!-- card2: clipboard + pencil badge -->
<g>
<rect x="821.800" y="433.400" width="32" height="37" rx="2" fill="#5e90ea"/>
<rect x="831.600" y="431.400" width="12.400" height="4.400" rx="1" fill="#4f81de"/>
<rect x="825.400" y="436.400" width="24.800" height="30.600" fill="#eef3fc"/>
<circle cx="831.200" cy="444.600" r="2.300" stroke="#9aa3b2" stroke-width=".7" fill="#f6f8fc"/><circle cx="831.200" cy="454.600" r="2.300" stroke="#9aa3b2" stroke-width=".7" fill="#f6f8fc"/>
<path d="M830.800 443.800v1.800M830.800 453.800v1.800" stroke="#9aa3b2" stroke-width=".6"/>
<path d="M835 442.800h13.400M835 446.200h13.400M835 452.800h9M835 456.200h6" stroke="#b4bccb" stroke-width=".9" stroke-linecap="butt"/>
<circle cx="850.900" cy="463.100" r="9.300" fill="#4f7a66" stroke="#eef3fb" stroke-width="1"/>
<path d="M846.600 467.400l.8-3 6.200-6.200a1.500 1.500 0 0 1 2.200 2.200l-6.200 6.200z" fill="#fff"/>
</g>
<!-- card3: OCR -->
<g>
<rect x="1028.400" y="435.400" width="22.800" height="26" rx="1.500" fill="#eef3fc" stroke="#6b9aee" stroke-width="2.400"/>
<path d="M1040.800 441h5M1043.300 441v4.600M1039.600 448.600h8M1039.600 452h8M1039.600 455.400h8" stroke="#a9b3c4" stroke-width=".8" stroke-linecap="butt"/>
<path d="M1016.800 459.200h38v9.300a2 2 0 0 1-2 2h-34a2 2 0 0 1-2-2z" fill="#5e90ea"/>
<path d="M1019.400 440.200h19v19.600l-3.200 2.800-3.200-2.800h-12.600z" fill="#4f7a66" stroke="#e9eef5" stroke-width=".5"/>
<text x="1028.900" y="452.400" font-family="Liberation Sans,sans-serif" font-weight="bold" font-size="7.200" fill="#fff" text-anchor="middle">OCR</text>
</g>
<!-- card4: folder + gear -->
<g>
<path d="M1220.200 437.400a2 2 0 0 1 2-2h32.800a2 2 0 0 1 2 2v27.700a2 2 0 0 1-2 2h-32.800a2 2 0 0 1-2-2z" fill="#5e90ea"/>
<rect x="1223.800" y="438.600" width="29.600" height="16" fill="#ecf1fb"/>
<path d="M1228.600 442h17M1228.600 445.400h12M1231 448.800h7.600" stroke="#b4bccb" stroke-width=".8" stroke-linecap="butt"/>
<path d="M1244.400 446.200h4.400l-1.400-1.400M1248.800 448.800h-4.400l1.400 1.400" stroke="#8f9bb0" stroke-width=".7"/>
<path d="M1220.200 448.400h11.600l3 3.600h22.200v13.100a2 2 0 0 1-2 2h-32.800a2 2 0 0 1-2-2z" fill="#5e90ea"/>
<circle cx="1251.500" cy="463.500" r="8.900" fill="#4f7a66" stroke="#eef3fb" stroke-width="1"/>
<g transform="translate(1251.500 463.500) scale(.92)">
<path d="M-1.100 -5.600h2.200l.5 1.700 1.500.8 1.700-.5 1.100 1.900-1.200 1.300v1.600l1.200 1.300-1.100 1.900-1.700-.5-1.500.8-.5 1.700h-2.200l-.5-1.700-1.500-.8-1.700.5-1.100-1.900 1.200-1.300v-1.600l-1.200-1.300 1.100-1.900 1.700.5 1.500-.8z" fill="#fff"/><circle r="2" fill="#4f7a66"/>
</g>
</g>
<!-- ===== row icons ===== -->
<g stroke="#2e72da" stroke-width="1.100">
<!-- 比例 -->
<path d="M499 505v4.400M512.800 505v4.400M499.600 507.200h12.600"/>
<rect x="499" y="511.400" width="13.800" height="5" rx=".6" fill="#cfe0fa"/><path d="M501.600 511.600v2M504.200 511.600v1.400M506.800 511.600v2M509.400 511.600v1.400" stroke-width=".7"/>
<!-- 长度测量 -->
<path d="M592.400 506.600v8M606.600 506.600v8M593.400 510.600h12.200M595.400 508.800l-2 1.800 2 1.800M603.600 508.800l2 1.800-2 1.800"/>
<!-- 面积测量 -->
<rect x="499" y="546.800" width="13.800" height="7.800" fill="#cfe0fa"/>
<path d="M499 551.400l4.600-4.600M499 554.600l7.800-7.800M502.600 554.600l7.800-7.800M506.200 554.600l6.600-6.600M509.800 554.600l3-3" stroke-width=".6"/>
<path d="M499 556.200v3.600M512.800 556.200v3.600M499.600 558h12.600" stroke-width="1"/>
<!-- 角度测量 -->
<path d="M605.400 547.800l-13.200 10.600h14.600M599.600 558.200a6 6 0 0 0-2.200-4.200" stroke-width="1.200"/>
<!-- 计数测量 -->
<circle cx="505.600" cy="595.800" r="6.900"/><path d="M501.800 595.800h7.600M505.600 592v7.600"/>
<!-- 测量统计 -->
<path d="M596 602.400h-1.800a1.400 1.400 0 0 1-1.400-1.400v-10.600a1.400 1.400 0 0 1 1.400-1.400h10a1.400 1.400 0 0 1 1.400 1.400v7.400"/>
<path d="M595.400 594.600l2.600-2 1.800 1.200 2.600-2M595.600 597.200h7" stroke-width=".8"/>
<path d="M597.600 599.400v3.600M605.800 599.400v3.600M598.400 601.200h6.600" stroke-width=".9"/>
<!-- 编号 -->
<circle cx="702.200" cy="507" r="3.300"/><circle cx="709.800" cy="507" r="3.300"/><circle cx="702.200" cy="514.400" r="3.300"/><circle cx="709.800" cy="514.400" r="3.300"/>
<path d="M702.200 505.400v3.200M709 506a1 1 0 0 1 1.600.8l-1.600 1.600h1.800M701.400 513a1 1 0 1 1 1 1.400 1 1 0 1 1-1 1.400M710.400 512.800l-1.400 2.200h2.200M710.400 512.800v3.200" stroke-width=".6"/>
<!-- 画直线 -->
<path d="M792.400 516.600l12-11.600" stroke-width="1.200"/>
<!-- 高亮 -->
<path d="M702 555.400l-1.600-2.400 7-6.200 3.600 4.200-6.600 5.600zM700.400 553l-1.400 3.600 2.600-.8M699 558.600h13.800" />
<path d="M699 560h13.800" stroke-dasharray="1.600 1.200" stroke-width=".8"/>
<!-- 文字 T (strokes are an icon) -->
<!-- 形状标记 -->
<path d="M700.20 589.80a2.36 2.36 0 0 1 3.80 0a2.36 2.36 0 0 1 3.80 0a2.36 2.36 0 0 1 3.80 0a2.19 2.19 0 0 1 0 3.53a2.19 2.19 0 0 1 0 3.53a2.19 2.19 0 0 1 0 3.53a2.36 2.36 0 0 1 -3.80 0a2.36 2.36 0 0 1 -3.80 0a2.36 2.36 0 0 1 -3.80 0a2.19 2.19 0 0 1 0 -3.53a2.19 2.19 0 0 1 0 -3.53a2.19 2.19 0 0 1 0 -3.53z"/>
<!-- 擦除 -->
<path d="M790.800 596.600l7.800-8 6.800 5.800-7.600 7.800h-2.800zM794.400 593l6.600 6M797.800 602.200h7.600"/>
<!-- 图纸对比 -->
<rect x="897" y="503" width="9.600" height="9.600" rx="1.800"/><rect x="892.600" y="507.600" width="9.600" height="9.600" rx="1.800"/>
<path d="M897 507.600h3.400a1.800 1.800 0 0 1 1.800 1.800v3.200h-3.400a1.800 1.800 0 0 1-1.800-1.800z" fill="#2e72da"/>
<path d="M903.600 505.600h.8M895.200 514.400h.8" stroke-width="1.200"/>
<!-- 提取文字 -->
<path d="M990.400 507.400v-1.800a1 1 0 0 1 1-1h2M1000.400 504.600h2a1 1 0 0 1 1 1v1.800M993.400 517h-2a1 1 0 0 1-1-1v-1.800M993.400 507.600h7.400M997 507.600v9.400M1000.200 511.600h3.400M1000.200 514.200h3.400M1000.200 516.800h3.400" />
<!-- 转为可搜索 -->
<circle cx="898.800" cy="552.200" r="6.300"/><path d="M903.400 556.800l3 3M895.800 549.600h6M898.800 549.600v5.600M897.600 555.200h2.400"/>
<!-- 图形识别 -->
<path d="M990.400 549v-1.800a1 1 0 0 1 1-1h2M1000.400 546.200h2a1 1 0 0 1 1 1v1.800M1003.400 556.200v1.800a1 1 0 0 1-1 1h-2M993.400 559h-2a1 1 0 0 1-1-1v-1.800"/>
<path d="M994.600 548.600l2.200 4.200h-4.400z" stroke-width=".9"/><circle cx="1000" cy="549.600" r="1.800" stroke-width=".9"/><rect x="998" y="553.400" width="3.800" height="3.800" stroke-width=".9"/>
<!-- 批量提取表格 -->
<path d="M894 590.400a1.400 1.400 0 0 1 1.400-1.400h6.800l3.400 3.400v8.600a1.400 1.400 0 0 1-1.400 1.400h-8.800a1.400 1.400 0 0 1-1.400-1.400z" fill="#dbe8fb"/>
<rect x="896.200" y="594.400" width="7.200" height="6" fill="#fff" stroke-width=".8"/><path d="M896.200 596.600h7.200M898.800 596.600v3.800" stroke-width=".8"/>
<!-- 自动生成书签 -->
<path d="M990.600 589h7.400M990.600 589v12.400l3.800-2.600 3.400 2.400M999.800 592.400v6.600M997.800 592.200h5.600v7.200h-5.600M1001.600 590.600v2M1001.600 599.200v2"/>
<!-- PDF转CAD -->
<rect x="1094.800" y="503.200" width="7.400" height="8" rx="1.400"/><rect x="1100.400" y="509.800" width="9" height="7.600" rx="1.400" fill="#dbe8fb"/>
<path d="M1097.400 509v-4h1.400a1.200 1.200 0 0 1 0 2.400h-1.400" stroke-width=".7"/>
<path d="M1102.600 515.200h4.600M1102.600 513.200h4.600" stroke-width=".7"/>
<path d="M1105 504.600h2.400a1 1 0 0 1 1 1v1.800M1107.200 506.200l1.200 1.400 1.200-1.400" stroke-width=".8"/>
<!-- 图片转PDF -->
<rect x="1186.900" y="503.200" width="7.400" height="8" rx="1.400"/><rect x="1192.500" y="509.800" width="9" height="7.600" rx="1.400" fill="#dbe8fb"/>
<path d="M1188.200 509.600l2-2.400 1.400 1.400 1.200-1" stroke-width=".7"/>
<path d="M1195.800 516v-4.400h1.600a1.300 1.300 0 0 1 0 2.600h-1.600" stroke-width=".8"/>
<path d="M1197.100 504.600h2.400a1 1 0 0 1 1 1v1.800M1199.300 506.200l1.200 1.400 1.200-1.400" stroke-width=".8"/>
<!-- 合并文档 -->
<path d="M1101 550.600v-3.400h-5.400v12h5.400v-3.400M1102.400 550.600v-3.400h5.400v12h-5.400v-3.400" fill="#e3edfc"/>
<path d="M1096.800 553.200h3.800M1099.200 551.600l1.600 1.600-1.600 1.600M1106.600 553.200h-3.800M1104.200 551.600l-1.600 1.600 1.600 1.600" stroke-width=".9"/>
<!-- 拆分页面 -->
<path d="M1192.400 549.200l1.600-2.400h3.800l2.600 2.600v7.400h-4" fill="#e3edfc"/>
<path d="M1187.800 550.200a1 1 0 0 1 1-1h4.600l2.600 2.600v6.600a1 1 0 0 1-1 1h-6.200a1 1 0 0 1-1-1z" fill="#e3edfc"/>
<path d="M1189.400 554.800h3.600M1191.800 553.400l1.400 1.400-1.400 1.400M1196.200 551.600h2.800M1197.600 550.200v2.800" stroke-width=".8"/>
<!-- 提取页面 -->
<rect x="1096.600" y="589.200" width="10.800" height="13" rx="1" fill="#e3edfc"/>
<path d="M1102 594.800v-3.800M1100.400 592.400l1.600-1.600 1.600 1.600M1098.800 597.200h6.400M1098.800 599h6.400M1098.800 600.800h6.400" stroke-width=".8"/>
<!-- 插入页面 -->
<path d="M1195.200 589.200l3 3v2.400M1195.200 589.200h-5.600a1 1 0 0 0-1 1v10.400a1 1 0 0 0 1 1h3.400M1195.200 589.200v3h3"/>
<path d="M1198.800 596a3.400 3.400 0 0 1-3.200 3.400h-2.400M1194.800 597.800l-1.800 1.600 1.800 1.600" stroke-width="1"/>
</g>
<text x="798" y="559.700" font-family="Liberation Serif,Noto Serif CJK SC,serif" font-weight="400" font-size="19.600" fill="#2e72da" text-anchor="middle" textLength="13.400" lengthAdjust="spacingAndGlyphs">T</text>
</svg>

</div>

</div>
</body>
</html>
